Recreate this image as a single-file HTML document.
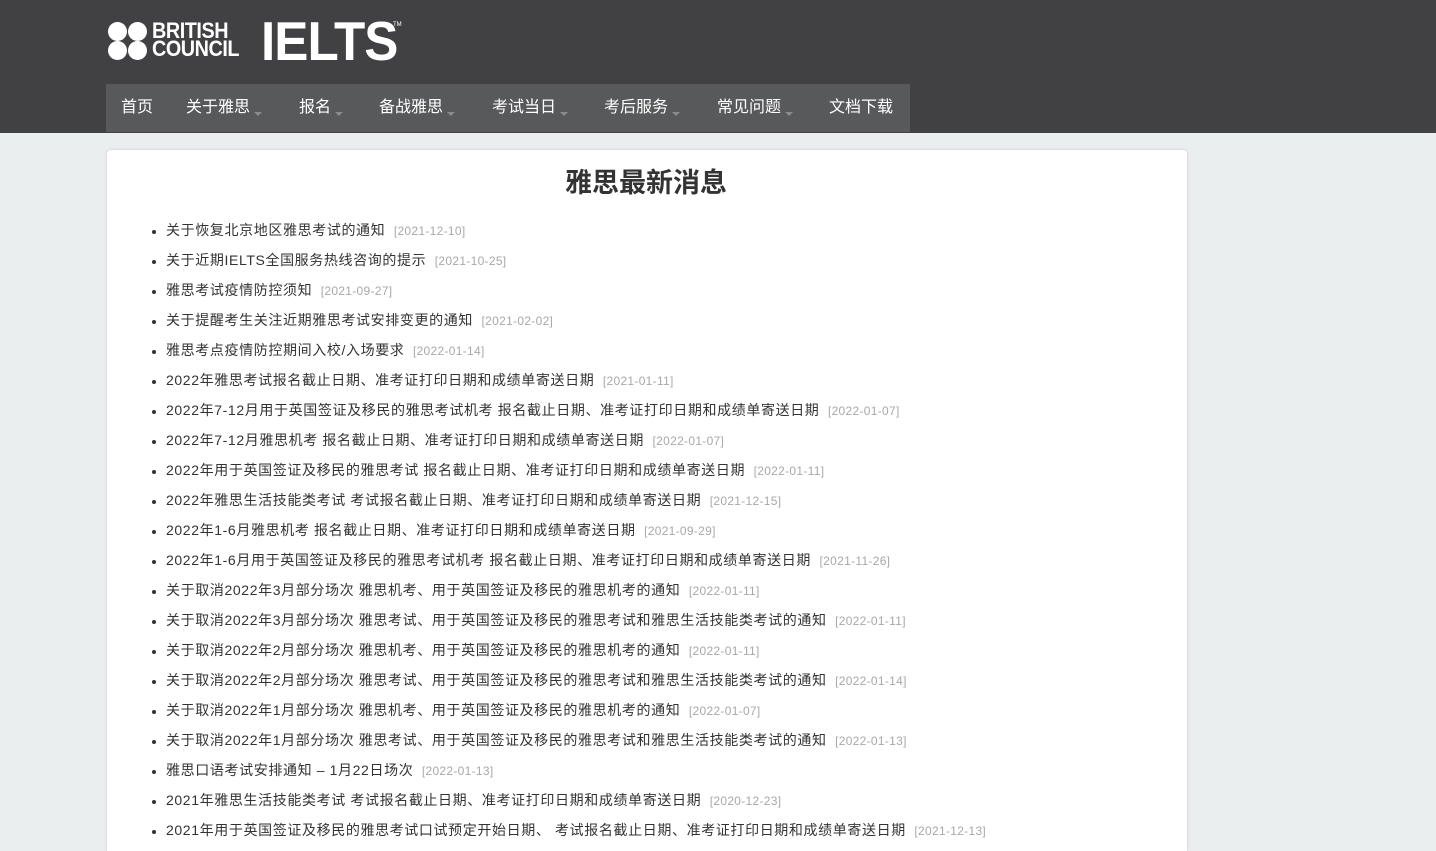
<!DOCTYPE html>
<html><head><meta charset="utf-8"><style>
*{margin:0;padding:0;box-sizing:border-box}
html,body{width:1436px;height:851px;overflow:hidden}
body{background:#ebeeef;font-family:"Liberation Sans","Noto Sans CJK SC",sans-serif;position:relative}
.hd{height:133px;background:#414143;position:relative}
.c{position:absolute;width:19px;height:19px;border-radius:50%;background:#fff}
.bc{position:absolute;left:152px;color:#fff;font-weight:bold;font-size:22px;line-height:18px;transform-origin:0 0;transform:scaleX(0.9);letter-spacing:-0.5px}
.ie{position:absolute;left:261px;top:14px;color:#fff;font-weight:bold;font-size:55px;line-height:55px;transform-origin:0 0;transform:scaleX(0.93);letter-spacing:-1px}
.tm{position:absolute;left:393px;top:22px;color:#fff;font-size:6px}
.nav{position:absolute;left:106px;top:84px;width:804px;height:48px;background:#58595b}
.nav span{position:absolute;top:14px;color:#fff;font-size:16px;line-height:20px}
.nav i{display:inline-block;width:0;height:0;border-left:4px solid transparent;border-right:4px solid transparent;border-top:4px solid #8a8b8d;margin-left:4px;vertical-align:-4px}
.card{position:absolute;left:107px;top:150px;width:1080px;height:701px;background:#fff;border-radius:4px 4px 0 0;box-shadow:0 0 3px rgba(0,0,0,.15)}
h1{position:absolute;left:0;width:1292px;top:166px;text-align:center;font-size:27px;color:#333;font-weight:bold;line-height:34px}
ul{position:absolute;left:166px;top:218px;list-style:disc;color:#333}
li{height:30px;line-height:24px;font-size:14px;color:#333;letter-spacing:0.62px;white-space:nowrap}
li::marker{font-size:12px}
li em{font-style:normal;font-size:12px;color:#a8a8a8;margin-left:4px;letter-spacing:0.3px}
</style></head><body>
<div class="hd">
<div class="c" style="left:108px;top:22px"></div><div class="c" style="left:128px;top:22px"></div>
<div class="c" style="left:108px;top:41px"></div><div class="c" style="left:128px;top:41px"></div>
<div class="bc" style="top:22px">BRITISH</div><div class="bc" style="top:40px">COUNCIL</div>
<div class="ie">IELTS</div><div class="tm">TM</div>
<div class="nav">
<span style="left:15px">首页</span>
<span style="left:80px">关于雅思<i></i></span>
<span style="left:193px">报名<i></i></span>
<span style="left:273px">备战雅思<i></i></span>
<span style="left:386px">考试当日<i></i></span>
<span style="left:498px">考后服务<i></i></span>
<span style="left:611px">常见问题<i></i></span>
<span style="left:723px">文档下载</span>
</div></div>
<div class="card"></div>
<h1>雅思最新消息</h1>
<ul>
<li>关于恢复北京地区雅思考试的通知 <em>[2021-12-10]</em></li>
<li>关于近期IELTS全国服务热线咨询的提示 <em>[2021-10-25]</em></li>
<li>雅思考试疫情防控须知 <em>[2021-09-27]</em></li>
<li>关于提醒考生关注近期雅思考试安排变更的通知 <em>[2021-02-02]</em></li>
<li>雅思考点疫情防控期间入校/入场要求 <em>[2022-01-14]</em></li>
<li>2022年雅思考试报名截止日期、准考证打印日期和成绩单寄送日期 <em>[2021-01-11]</em></li>
<li>2022年7-12月用于英国签证及移民的雅思考试机考 报名截止日期、准考证打印日期和成绩单寄送日期 <em>[2022-01-07]</em></li>
<li>2022年7-12月雅思机考 报名截止日期、准考证打印日期和成绩单寄送日期 <em>[2022-01-07]</em></li>
<li>2022年用于英国签证及移民的雅思考试 报名截止日期、准考证打印日期和成绩单寄送日期 <em>[2022-01-11]</em></li>
<li>2022年雅思生活技能类考试 考试报名截止日期、准考证打印日期和成绩单寄送日期 <em>[2021-12-15]</em></li>
<li>2022年1-6月雅思机考 报名截止日期、准考证打印日期和成绩单寄送日期 <em>[2021-09-29]</em></li>
<li>2022年1-6月用于英国签证及移民的雅思考试机考 报名截止日期、准考证打印日期和成绩单寄送日期 <em>[2021-11-26]</em></li>
<li>关于取消2022年3月部分场次 雅思机考、用于英国签证及移民的雅思机考的通知 <em>[2022-01-11]</em></li>
<li>关于取消2022年3月部分场次 雅思考试、用于英国签证及移民的雅思考试和雅思生活技能类考试的通知 <em>[2022-01-11]</em></li>
<li>关于取消2022年2月部分场次 雅思机考、用于英国签证及移民的雅思机考的通知 <em>[2022-01-11]</em></li>
<li>关于取消2022年2月部分场次 雅思考试、用于英国签证及移民的雅思考试和雅思生活技能类考试的通知 <em>[2022-01-14]</em></li>
<li>关于取消2022年1月部分场次 雅思机考、用于英国签证及移民的雅思机考的通知 <em>[2022-01-07]</em></li>
<li>关于取消2022年1月部分场次 雅思考试、用于英国签证及移民的雅思考试和雅思生活技能类考试的通知 <em>[2022-01-13]</em></li>
<li>雅思口语考试安排通知 – 1月22日场次 <em>[2022-01-13]</em></li>
<li>2021年雅思生活技能类考试 考试报名截止日期、准考证打印日期和成绩单寄送日期 <em>[2020-12-23]</em></li>
<li>2021年用于英国签证及移民的雅思考试口试预定开始日期、 考试报名截止日期、准考证打印日期和成绩单寄送日期 <em>[2021-12-13]</em></li>
</ul>
</body></html>
